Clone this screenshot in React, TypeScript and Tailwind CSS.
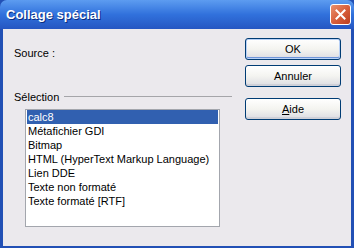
const items = [
  "calc8",
  "Métafichier GDI",
  "Bitmap",
  "HTML (HyperText Markup Language)",
  "Lien DDE",
  "Texte non formaté",
  "Texte formaté [RTF]",
]

const XpButton = ({ children, isDefault }: { children: React.ReactNode; isDefault?: boolean }) => (
  <button
    className={`flex h-[22px] w-[96px] items-center justify-center rounded-[3px] border border-[#003C74] bg-gradient-to-b from-white via-[#F4F4F0] to-[#DCDCE2] text-[11px] leading-none text-black ${
      isDefault ? "shadow-[inset_0_0_0_1px_#B9D1F6,inset_0_-1px_0_1px_#6F95DA]" : "shadow-[inset_0_-2px_0_#CFD0D8]"
    }`}
  >
    {children}
  </button>
)

const App = () => {
  return (
    <div className="flex h-[248px] w-[354px] flex-col overflow-hidden bg-[#2250B5] font-['Liberation_Sans',sans-serif]">
      {/* Barre de titre */}
      <div className="flex h-[29px] shrink-0 items-center justify-between rounded-t-[7px] bg-gradient-to-b from-[#5D9CF0] via-[#3171DC] to-[#2556C2] pl-[6px] pr-[3px]">
        <span className="text-[13px] font-bold text-white [text-shadow:1px_1px_0_#0B2D80]">
          Collage spécial
        </span>
        <div className="mb-[1px] flex h-[21px] w-[21px] items-center justify-center rounded-[3px] border border-white bg-gradient-to-br from-[#E8906E] via-[#D8603C] to-[#BC3E1F]">
          <svg width="11" height="11" viewBox="0 0 11 11">
            <path d="M1.5 1.5 L9.5 9.5 M9.5 1.5 L1.5 9.5" stroke="white" strokeWidth="2" strokeLinecap="square" />
          </svg>
        </div>
      </div>

      {/* Contenu */}
      <div className="mx-[3px] mb-[2px] flex flex-1 gap-[13px] bg-[#EBE9ED] pl-[11px]">
        <div className="flex w-[218px] flex-col pt-[17px] text-[11px] leading-[14px] text-black">
          <p>Source :</p>
          <div className="mt-[30px] flex items-center gap-[5px]">
            <span>Sélection</span>
            <div className="h-[2px] flex-1 border-t border-[#A5A5A9] border-b-white" />
          </div>
          <div className="ml-[11px] mt-[5px] h-[118px] w-[195px] border border-[#A3A6AD] bg-white px-[1px]">
            {items.map((item, i) => (
              <div
                key={item}
                className={`h-[14px] whitespace-nowrap pl-[1px] leading-[14px] ${
                  i === 0 ? "bg-[#3160B0] text-white" : ""
                }`}
              >
                {item}
              </div>
            ))}
          </div>
        </div>

        <div className="flex flex-col pt-[9px]">
          <XpButton isDefault>OK</XpButton>
          <div className="mt-[5px]">
            <XpButton>Annuler</XpButton>
          </div>
          <div className="mt-[11px]">
            <XpButton>
              <span>
                <span className="underline">A</span>ide
              </span>
            </XpButton>
          </div>
        </div>
      </div>
    </div>
  )
}

export default App
